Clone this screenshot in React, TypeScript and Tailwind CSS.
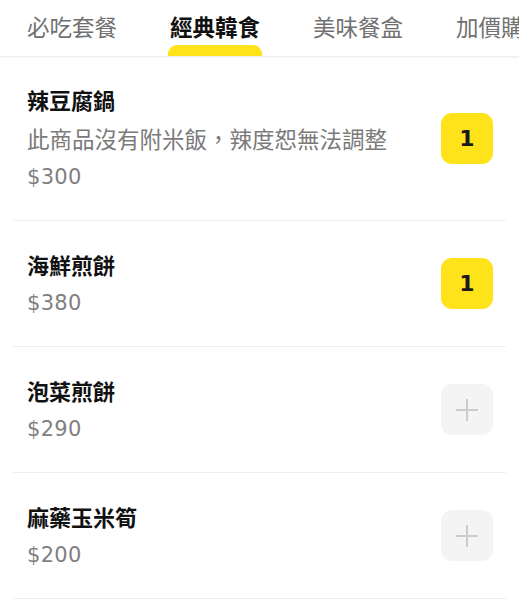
import React from "react";

const tabs = ["必吃套餐", "經典韓食", "美味餐盒", "加價購"];

type Item = { name: string; desc?: string; price: string; qty: number };
const items: Item[] = [
  { name: "辣豆腐鍋", desc: "此商品沒有附米飯，辣度恕無法調整", price: "$300", qty: 1 },
  { name: "海鮮煎餅", price: "$380", qty: 1 },
  { name: "泡菜煎餅", price: "$290", qty: 0 },
  { name: "麻藥玉米筍", price: "$200", qty: 0 },
];

const cjk = { fontFamily: '"Noto Sans CJK TC", "Noto Sans CJK SC", sans-serif' };
const num = { fontFamily: '"DejaVu Sans", "Noto Sans", sans-serif' };

export default function App() {
  return (
    <div className="w-[519px] h-[600px] bg-white overflow-hidden" style={cjk}>
      <div className="flex h-[57px] border-b border-[#eeeeee] pl-[27px] gap-[53px] overflow-hidden whitespace-nowrap shadow-[0_1px_2px_rgba(0,0,0,0.04)]">
        {tabs.map((t, i) => (
          <div key={t} className="relative flex flex-col items-center shrink-0">
            <div
              className={
                "text-[22.5px] leading-[30px] mt-[11px] " +
                (i === 1 ? "font-bold text-[#111111]" : "text-[#707070]")
              }
            >
              {t}
            </div>
            {i === 1 && (
              <div className="absolute bottom-0 left-[-2px] right-[-2px] h-[11px] bg-[#ffe31a] rounded-t-[9px]" />
            )}
          </div>
        ))}
      </div>
      <div>
        {items.map((it, idx) => (
          <div
            key={it.name}
            className={
              "mx-[13px] border-b border-[#eeeeee] flex items-center justify-between pl-[14px] pr-[13px] " +
              (idx === 0 ? "pt-[27px] pb-[28px]" : "pt-[28px] pb-[28px]")
            }
          >
            <div className="flex flex-col gap-[9px]">
              <div className="text-[22px] leading-[30px] font-bold text-[#111111]">{it.name}</div>
              {it.desc && (
                <div className="text-[22.5px] leading-[30px] text-[#7a7a7a]">{it.desc}</div>
              )}
              <div className="text-[21px] leading-[30px] text-[#7f7f7f] tracking-[0.3px]" style={num}>
                {it.price}
              </div>
            </div>
            {it.qty > 0 ? (
              <div
                className="w-[52px] h-[51px] rounded-[11px] bg-[#ffe31a] flex items-center justify-center text-[22px] font-bold text-[#1a1a1a]"
                style={num}
              >
                {it.qty}
              </div>
            ) : (
              <div className="w-[52px] h-[51px] rounded-[11px] bg-[#f4f4f4] flex items-center justify-center">
                <svg width="24" height="24" viewBox="0 0 24 24">
                  <path d="M12 1v22M1 12h22" stroke="#cccccc" strokeWidth="2" fill="none" />
                </svg>
              </div>
            )}
          </div>
        ))}
      </div>
    </div>
  );
}
